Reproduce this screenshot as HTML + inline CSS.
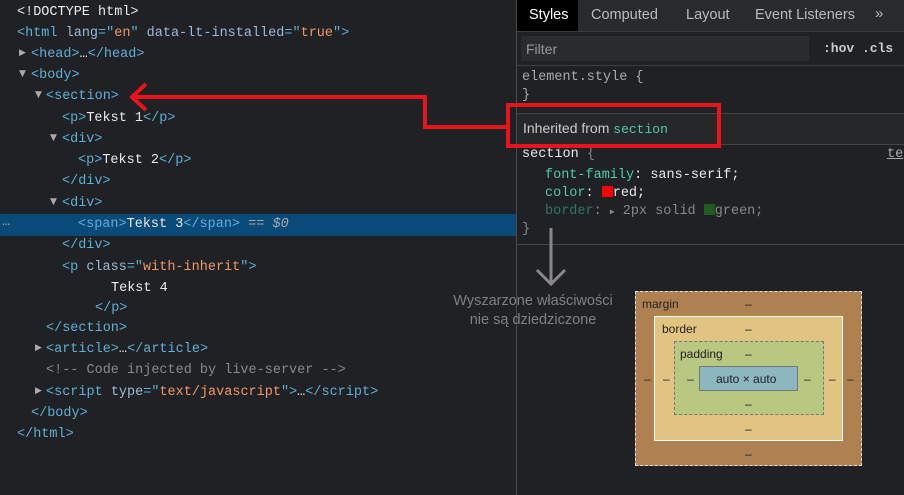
<!DOCTYPE html>
<html><head><style>
body{margin:0;width:904px;height:495px;background:#202124;position:relative;overflow:hidden;font-family:"Liberation Mono",monospace;}
.l{position:absolute;font-size:13.5px;color:#e8eaed;white-space:pre;line-height:16px;}
.t{color:#5db0d7}.a{color:#9bbbdc}.v{color:#f29766}.c{color:#898989}
.tri{position:absolute;color:#aaa;font-size:9px;font-family:"DejaVu Sans",sans-serif}
.s{font-family:"Liberation Sans",sans-serif;position:absolute;white-space:pre}
.bm{position:absolute;box-sizing:border-box;font-family:"Liberation Sans",sans-serif;font-size:12px;color:#222}
.d{position:absolute;font-size:12px;color:#222;font-family:"Liberation Sans",sans-serif}
</style></head><body>
<div style="position:absolute;left:0;top:214;"></div>
<div style="position:absolute;left:0;top:214px;width:516px;height:22px;background:#0a4a78"></div>
<div class="l c" style="left:2px;top:215px;color:#aaa">…</div>
<div class="l" style="left:17px;top:5px">&lt;!DOCTYPE html&gt;</div>
<div class="l" style="left:17px;top:26px"><span class="t">&lt;html</span> <span class="a">lang</span><span class="t">="</span><span class="v">en</span><span class="t">"</span> <span class="a">data-lt-installed</span><span class="t">="</span><span class="v">true</span><span class="t">"&gt;</span></div>
<div class="tri" style="left:19px;top:48px">▶</div>
<div class="l" style="left:31px;top:47px"><span class="t">&lt;head&gt;</span>…<span class="t">&lt;/head&gt;</span></div>
<div class="tri" style="left:19px;top:69px">▼</div>
<div class="l t" style="left:31px;top:68px">&lt;body&gt;</div>
<div class="tri" style="left:35px;top:90px">▼</div>
<div class="l t" style="left:46px;top:89px">&lt;section&gt;</div>
<div class="l" style="left:62px;top:111px"><span class="t">&lt;p&gt;</span>Tekst 1<span class="t">&lt;/p&gt;</span></div>
<div class="tri" style="left:50px;top:133px">▼</div>
<div class="l t" style="left:62px;top:132px">&lt;div&gt;</div>
<div class="l" style="left:78px;top:153px"><span class="t">&lt;p&gt;</span>Tekst 2<span class="t">&lt;/p&gt;</span></div>
<div class="l t" style="left:62px;top:174px">&lt;/div&gt;</div>
<div class="tri" style="left:50px;top:197px">▼</div>
<div class="l t" style="left:62px;top:196px">&lt;div&gt;</div>
<div class="l" style="left:78px;top:217px"><span class="t">&lt;span&gt;</span>Tekst 3<span class="t">&lt;/span&gt;</span> <span style="color:#aaa">==</span> <i style="color:#aaa">$0</i></div>
<div class="l t" style="left:62px;top:238px">&lt;/div&gt;</div>
<div class="l" style="left:62px;top:260px"><span class="t">&lt;p</span> <span class="a">class</span><span class="t">="</span><span class="v">with-inherit</span><span class="t">"&gt;</span></div>
<div class="l" style="left:111px;top:281px">Tekst 4</div>
<div class="l t" style="left:95px;top:301px">&lt;/p&gt;</div>
<div class="l t" style="left:46px;top:321px">&lt;/section&gt;</div>
<div class="tri" style="left:35px;top:343px">▶</div>
<div class="l" style="left:46px;top:342px"><span class="t">&lt;article&gt;</span>…<span class="t">&lt;/article&gt;</span></div>
<div class="l c" style="left:46px;top:363px">&lt;!-- Code injected by live-server --&gt;</div>
<div class="tri" style="left:35px;top:386px">▶</div>
<div class="l" style="left:46px;top:385px"><span class="t">&lt;script</span> <span class="a">type</span><span class="t">="</span><span class="v">text/javascript</span><span class="t">"&gt;</span>…<span class="t">&lt;/script&gt;</span></div>
<div class="l t" style="left:31px;top:406px">&lt;/body&gt;</div>
<div class="l t" style="left:17px;top:427px">&lt;/html&gt;</div>

<div style="position:absolute;left:516px;top:0;width:1px;height:495px;background:#4a4a4a"></div>
<div style="position:absolute;left:517px;top:0;width:387px;height:31px;background:#292a2d;border-bottom:1px solid #3c3c3c"></div>
<div style="position:absolute;left:517px;top:0;width:61px;height:31px;background:#000"></div>
<div class="s" style="left:529px;top:7px;font-size:14.5px;color:#fff">Styles</div>
<div class="s" style="left:591px;top:7px;font-size:14.5px;color:#bbb">Computed</div>
<div class="s" style="left:686px;top:7px;font-size:14.5px;color:#bbb">Layout</div>
<div class="s" style="left:755px;top:7px;font-size:14.5px;color:#bbb">Event Listeners</div>
<div class="s" style="left:875px;top:5px;font-size:15px;color:#bbb">»</div>
<div style="position:absolute;left:521px;top:36px;width:288px;height:25px;background:#2a2b2e"></div>
<div class="s" style="left:526px;top:41px;font-size:14px;color:#999">Filter</div>
<div class="s" style="left:823px;top:41px;font-size:13px;color:#ccc;font-weight:bold;font-family:'Liberation Mono',monospace">:hov .cls</div>
<div style="position:absolute;left:517px;top:65px;width:387px;height:1px;background:#3c3c3c"></div>
<div class="l" style="left:522px;top:70px;color:#aaa">element.style {</div>
<div class="l" style="left:522px;top:88px;color:#aaa">}</div>
<div style="position:absolute;left:517px;top:113px;width:387px;height:30px;background:#262729;border-top:1px solid #444;border-bottom:1px solid #444"></div>
<div class="s" style="left:523px;top:120px;font-size:14px;color:#ccc">Inherited from <span style="font-family:'Liberation Mono',monospace;color:#4ec9b0;font-size:13px">section</span></div>
<div class="l" style="left:522px;top:147px">section <span style="color:#888">{</span></div>
<div class="l" style="left:887px;top:147px;color:#aaa;text-decoration:underline">te</div>
<div class="l" style="left:545px;top:168px"><span style="color:#4ec9b0">font-family</span>: sans-serif;</div>
<div class="l" style="left:545px;top:186px"><span style="color:#4ec9b0">color</span>: <span style="display:inline-block;width:11px;height:11px;background:#f00;vertical-align:-1px"></span>red;</div>
<div class="l" style="left:545px;top:204px;color:#888"><span style="color:#2f7566">border</span>: <span style="font-size:8px">▶</span> 2px solid <span style="display:inline-block;width:11px;height:11px;background:#1f5a1f;vertical-align:-1px"></span>green;</div>
<div class="l" style="left:522px;top:222px;color:#888">}</div>
<div style="position:absolute;left:517px;top:244px;width:387px;height:1px;background:#444"></div>

<svg style="position:absolute;left:0;top:0" width="904" height="495">
<polyline points="508,127 425,127 425,97 135,97" fill="none" stroke="#e8141c" stroke-width="4"/>
<polyline points="146,84 132,97 146,110" fill="none" stroke="#e8141c" stroke-width="4"/>
<rect x="508" y="105" width="211" height="41" fill="none" stroke="#e8141c" stroke-width="4"/>
<line x1="551" y1="228" x2="551" y2="283" stroke="#888" stroke-width="3"/>
<polyline points="537,270 551,284 565,270" fill="none" stroke="#888" stroke-width="3"/>
</svg>
<div class="s" style="left:433px;top:292px;width:200px;text-align:center;font-size:14.5px;color:#808080;line-height:19px">Wyszarzone właściwości<br>nie są dziedziczone</div>

<div class="bm" style="left:635px;top:291px;width:227px;height:175px;background:#b08150;border:1px dashed #ddd"></div>
<div class="bm" style="left:654px;top:316px;width:189px;height:125px;background:#e3c381;border:1px solid #fff"></div>
<div class="bm" style="left:674px;top:341px;width:150px;height:74px;background:#b8c881;border:1px dashed #777"></div>
<div class="bm" style="left:699px;top:366px;width:99px;height:25px;background:#8cb6c0;border:1px solid #777"></div>
<div class="d" style="left:642px;top:297px">margin</div>
<div class="d" style="left:662px;top:322px">border</div>
<div class="d" style="left:680px;top:347px">padding</div>
<div class="d" style="left:716px;top:372px">auto × auto</div>
<div class="d" style="left:745px;top:297px">–</div>
<div class="d" style="left:745px;top:322px">–</div>
<div class="d" style="left:745px;top:347px">–</div>
<div class="d" style="left:745px;top:397px">–</div>
<div class="d" style="left:745px;top:422px">–</div>
<div class="d" style="left:745px;top:447px">–</div>
<div class="d" style="left:644px;top:372px">–</div>
<div class="d" style="left:663px;top:372px">–</div>
<div class="d" style="left:687px;top:372px">–</div>
<div class="d" style="left:804px;top:372px">–</div>
<div class="d" style="left:829px;top:372px">–</div>
<div class="d" style="left:847px;top:372px">–</div>
</body></html>
